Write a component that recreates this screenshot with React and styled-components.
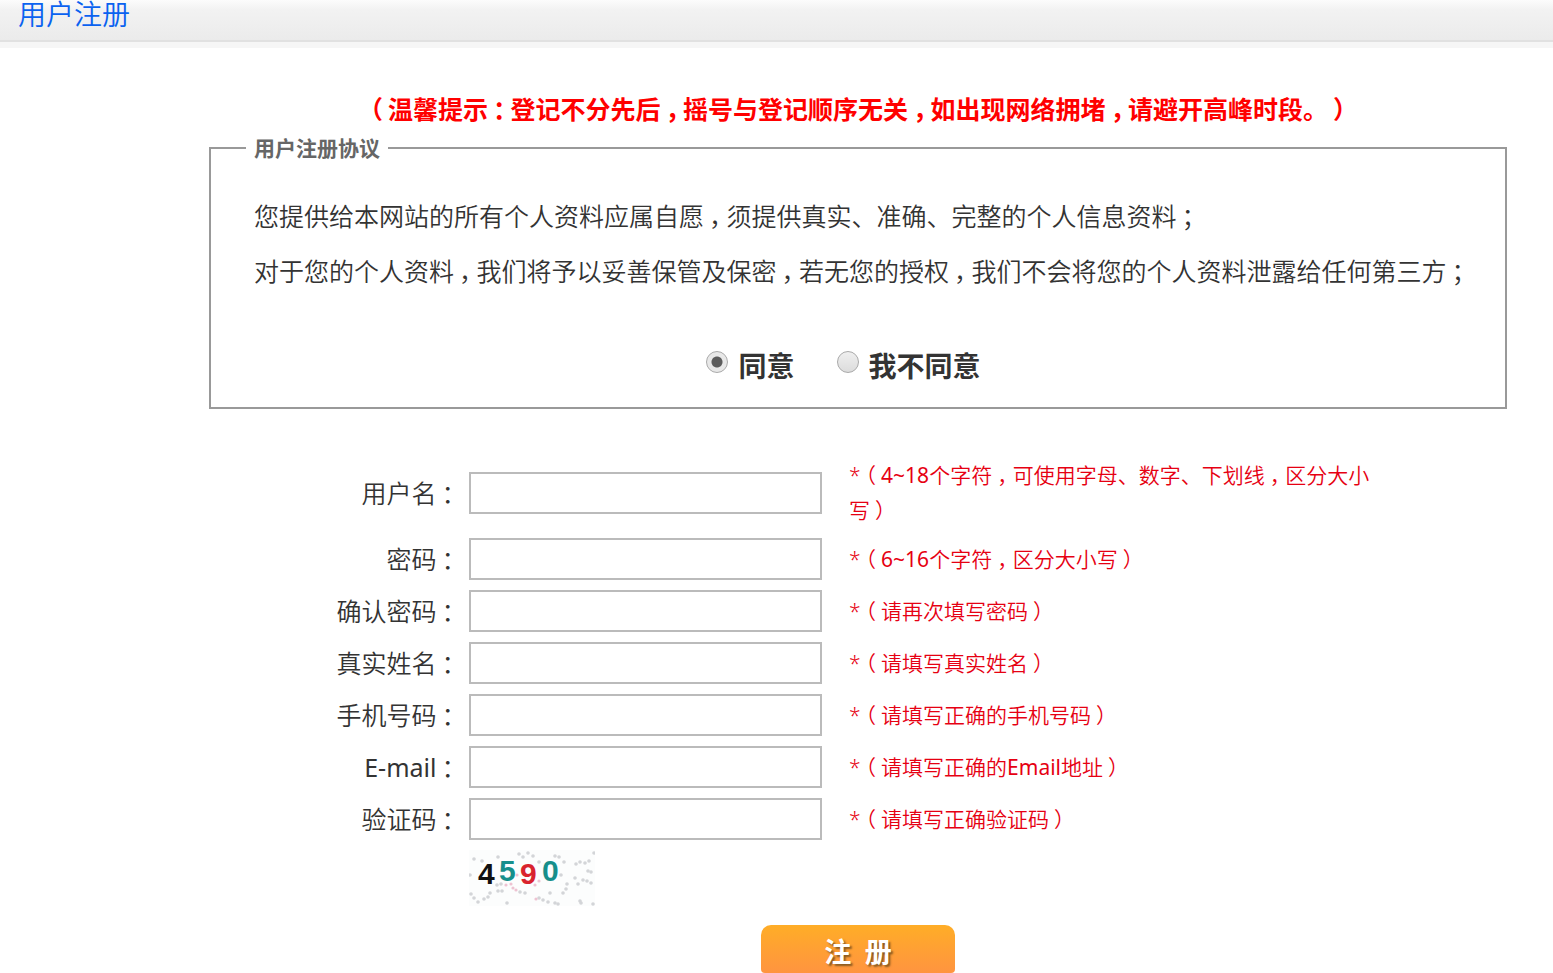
import React, { useState } from "react";
import styled, { createGlobalStyle } from "styled-components";

const GlobalStyle = createGlobalStyle`
  * {
    box-sizing: border-box;
  }

  body {
    margin: 0;
    background: #fff;
    color: #333;
    font-family: "Noto Sans", "Noto Sans CJK SC", sans-serif;
    font-size: 25px;
    font-weight: 350;
    text-spacing-trim: space-all;
  }
`;

// #region Styles
const Header = styled.header`
  height: 48px;
  border-bottom: 6px solid #f6f6f6;
  background: #f6f6f6;
`;

const HeaderTitle = styled.h1`
  height: 42px;
  margin: 0;
  padding-left: 18px;
  border-bottom: 2px solid #e1e1e1;
  background: linear-gradient(#fcfcfc 0, #f2f2f2 10px, #ebebeb 100%);
  color: #0a62f0;
  font-size: 28px;
  font-weight: 350;
  line-height: 28px;
`;

const Main = styled.main`
  margin: 36px 46px 0 209px;
`;

const Notice = styled.p`
  margin: 0 0 1px;
  color: #f00;
  font-weight: 700;
  line-height: 50px;
  text-align: center;
`;

const Agreement = styled.fieldset`
  min-width: 0;
  margin: 0;
  padding: 28px 20px 21px 35px;
  border: 2px solid #999;
`;

const Legend = styled.legend`
  padding: 0 8px;
  color: #666;
  font-size: 21px;
  font-weight: 700;
  line-height: 26px;
`;

const Clause = styled.p`
  margin: 0;
  padding-left: 8px;
  line-height: 55px;
`;

const Options = styled.div`
  display: flex;
  justify-content: center;
  gap: 42px;
  margin-top: 47px;
  padding-right: 44px;
`;

const Option = styled.label`
  display: flex;
  align-items: flex-start;
  gap: 10px;
  color: #333;
  font-size: 28px;
  font-weight: 700;
  line-height: 40px;
`;

const Radio = styled.input`
  appearance: none;
  width: 22px;
  height: 22px;
  margin: 5px 0 0;
  border: 1px solid #aaa;
  border-radius: 50%;
  background: linear-gradient(#efefef, #dcdcdc);

  &:checked {
    background: radial-gradient(circle, #5c5c5c 5px, #e8e8e8 6px);
  }
`;

const Form = styled.form`
  margin-top: 44px;
`;

const Row = styled.div`
  display: grid;
  grid-template-columns: 250px 353px minmax(0, 1fr);
  column-gap: 10px;
  align-items: center;
  padding: 5px 122px 5px 0;
`;

const Label = styled.label`
  line-height: 42px;
  text-align: right;
`;

const Input = styled.input`
  width: 100%;
  height: 42px;
  padding: 0 8px;
  border: 2px solid #bbb;
  background: #fff;
  font: inherit;
`;

const Hint = styled.span`
  padding-left: 17px;
  color: #e60012;
  font-size: 21px;
  line-height: 35px;
`;

const Captcha = styled.svg`
  display: block;
  grid-column: 2;
  width: 126px;
  height: 56px;
`;

const Submit = styled.button`
  display: block;
  width: 194px;
  height: 48px;
  margin: 14px auto 0;
  padding: 6px 0 0;
  border: 0;
  border-radius: 10px 10px 4px 4px;
  background: linear-gradient(#ffad27, #ff9440);
  color: #fff;
  font-family: inherit;
  font-size: 27px;
  font-weight: 700;
  line-height: 40px;
  text-shadow: 2px 2px 2px #8a5a20;
  cursor: pointer;
`;

const Mark = styled.span`
  padding: 0 5px;
  font-feature-settings: "halt";
`;

const Latin = styled.span`
  font-weight: 400;
`;
//#endregion

// full-width punctuation sits in the middle of its cell,
// latin runs are a step heavier than the light chinese text
function Text({ children }) {
  return children.split(/([，：；（）]|[\w~-]+)/).map((part, i) => {
    if (i % 2 === 0) return part;
    const Part = /[，：；（）]/.test(part) ? Mark : Latin;
    return <Part key={i}>{part}</Part>;
  });
}

const fields = [
  {
    id: "username",
    label: "用户名：",
    hint: "*（4~18个字符，可使用字母、数字、下划线，区分大小写）",
  },
  {
    id: "password",
    label: "密码：",
    hint: "*（6~16个字符，区分大小写）",
    type: "password",
  },
  {
    id: "confirm",
    label: "确认密码：",
    hint: "*（请再次填写密码）",
    type: "password",
  },
  { id: "realname", label: "真实姓名：", hint: "*（请填写真实姓名）" },
  { id: "phone", label: "手机号码：", hint: "*（请填写正确的手机号码）", type: "tel" },
  { id: "email", label: "E-mail：", hint: "*（请填写正确的Email地址）", type: "email" },
  { id: "code", label: "验证码：", hint: "*（请填写正确验证码）" },
];

const digits = [
  { value: "4", x: 9, y: 34, color: "#111" },
  { value: "5", x: 30, y: 31, color: "#168f8b" },
  { value: "9", x: 51, y: 34, color: "#d9232e" },
  { value: "0", x: 73, y: 31, color: "#168f8b" },
];

const specks = [
  [5, 9], [13, 11], [29, 7], [50, 4], [54, 7], [59, 3], [64, 6], [70, 12],
  [86, 6], [90, 7], [107, 14], [111, 12], [116, 13], [120, 11], [125, 3],
  [1, 25], [2, 44], [5, 48], [9, 52], [15, 49], [19, 47], [21, 43], [29, 41],
  [33, 41], [28, 35], [32, 34], [38, 53], [51, 42], [56, 43], [70, 48],
  [74, 50], [79, 52], [81, 43], [86, 53], [89, 54], [94, 43], [97, 39],
  [98, 34], [109, 34], [106, 28], [114, 30], [118, 31], [122, 33], [119, 21],
  [122, 22], [111, 51], [112, 53], [124, 54], [92, 25], [95, 12],
];

const pinkSpecks = [
  [42, 34], [44, 38], [47, 40], [67, 49], [70, 31], [66, 35], [48, 25], [37, 35],
];

export default function App() {
  const [agree, setAgree] = useState("yes");

  return (
    <>
      <GlobalStyle />
      <Header>
        <HeaderTitle>用户注册</HeaderTitle>
      </Header>
      <Main>
        <Notice>
          <Text>
            （温馨提示：登记不分先后，摇号与登记顺序无关，如出现网络拥堵，请避开高峰时段。）
          </Text>
        </Notice>
        <Agreement>
          <Legend>用户注册协议</Legend>
          <Clause>
            <Text>
              您提供给本网站的所有个人资料应属自愿，须提供真实、准确、完整的个人信息资料；
            </Text>
          </Clause>
          <Clause>
            <Text>
              对于您的个人资料，我们将予以妥善保管及保密，若无您的授权，我们不会将您的个人资料泄露给任何第三方；
            </Text>
          </Clause>
          <Options>
            <Option>
              <Radio
                type="radio"
                name="agree"
                checked={agree === "yes"}
                onChange={() => setAgree("yes")}
              />
              同意
            </Option>
            <Option>
              <Radio
                type="radio"
                name="agree"
                checked={agree === "no"}
                onChange={() => setAgree("no")}
              />
              我不同意
            </Option>
          </Options>
        </Agreement>

        <Form onSubmit={(e) => e.preventDefault()}>
          {fields.map((field) => (
            <Row key={field.id}>
              <Label htmlFor={field.id}>
                <Text>{field.label}</Text>
              </Label>
              <Input id={field.id} type={field.type || "text"} />
              <Hint>
                <Text>{field.hint}</Text>
              </Hint>
            </Row>
          ))}
          <Row>
            <Captcha viewBox="0 0 126 56">
              <rect width="126" height="56" fill="#fcfdfd" />
              {specks.map(([x, y]) => (
                <circle key={`${x}-${y}`} cx={x} cy={y} r="1.8" fill="#d3d5d8" />
              ))}
              {digits.map((d) => (
                <text
                  key={d.value}
                  x={d.x}
                  y={d.y}
                  fill={d.color}
                  fontFamily="Liberation Sans, sans-serif"
                  fontSize="30"
                  fontWeight="700"
                >
                  {d.value}
                </text>
              ))}
              {pinkSpecks.map(([x, y]) => (
                <circle key={`${x}-${y}`} cx={x} cy={y} r="1.6" fill="#eec3d2" />
              ))}
            </Captcha>
          </Row>
          <Submit type="submit">注{"\u2002"}册</Submit>
        </Form>
      </Main>
    </>
  );
}
